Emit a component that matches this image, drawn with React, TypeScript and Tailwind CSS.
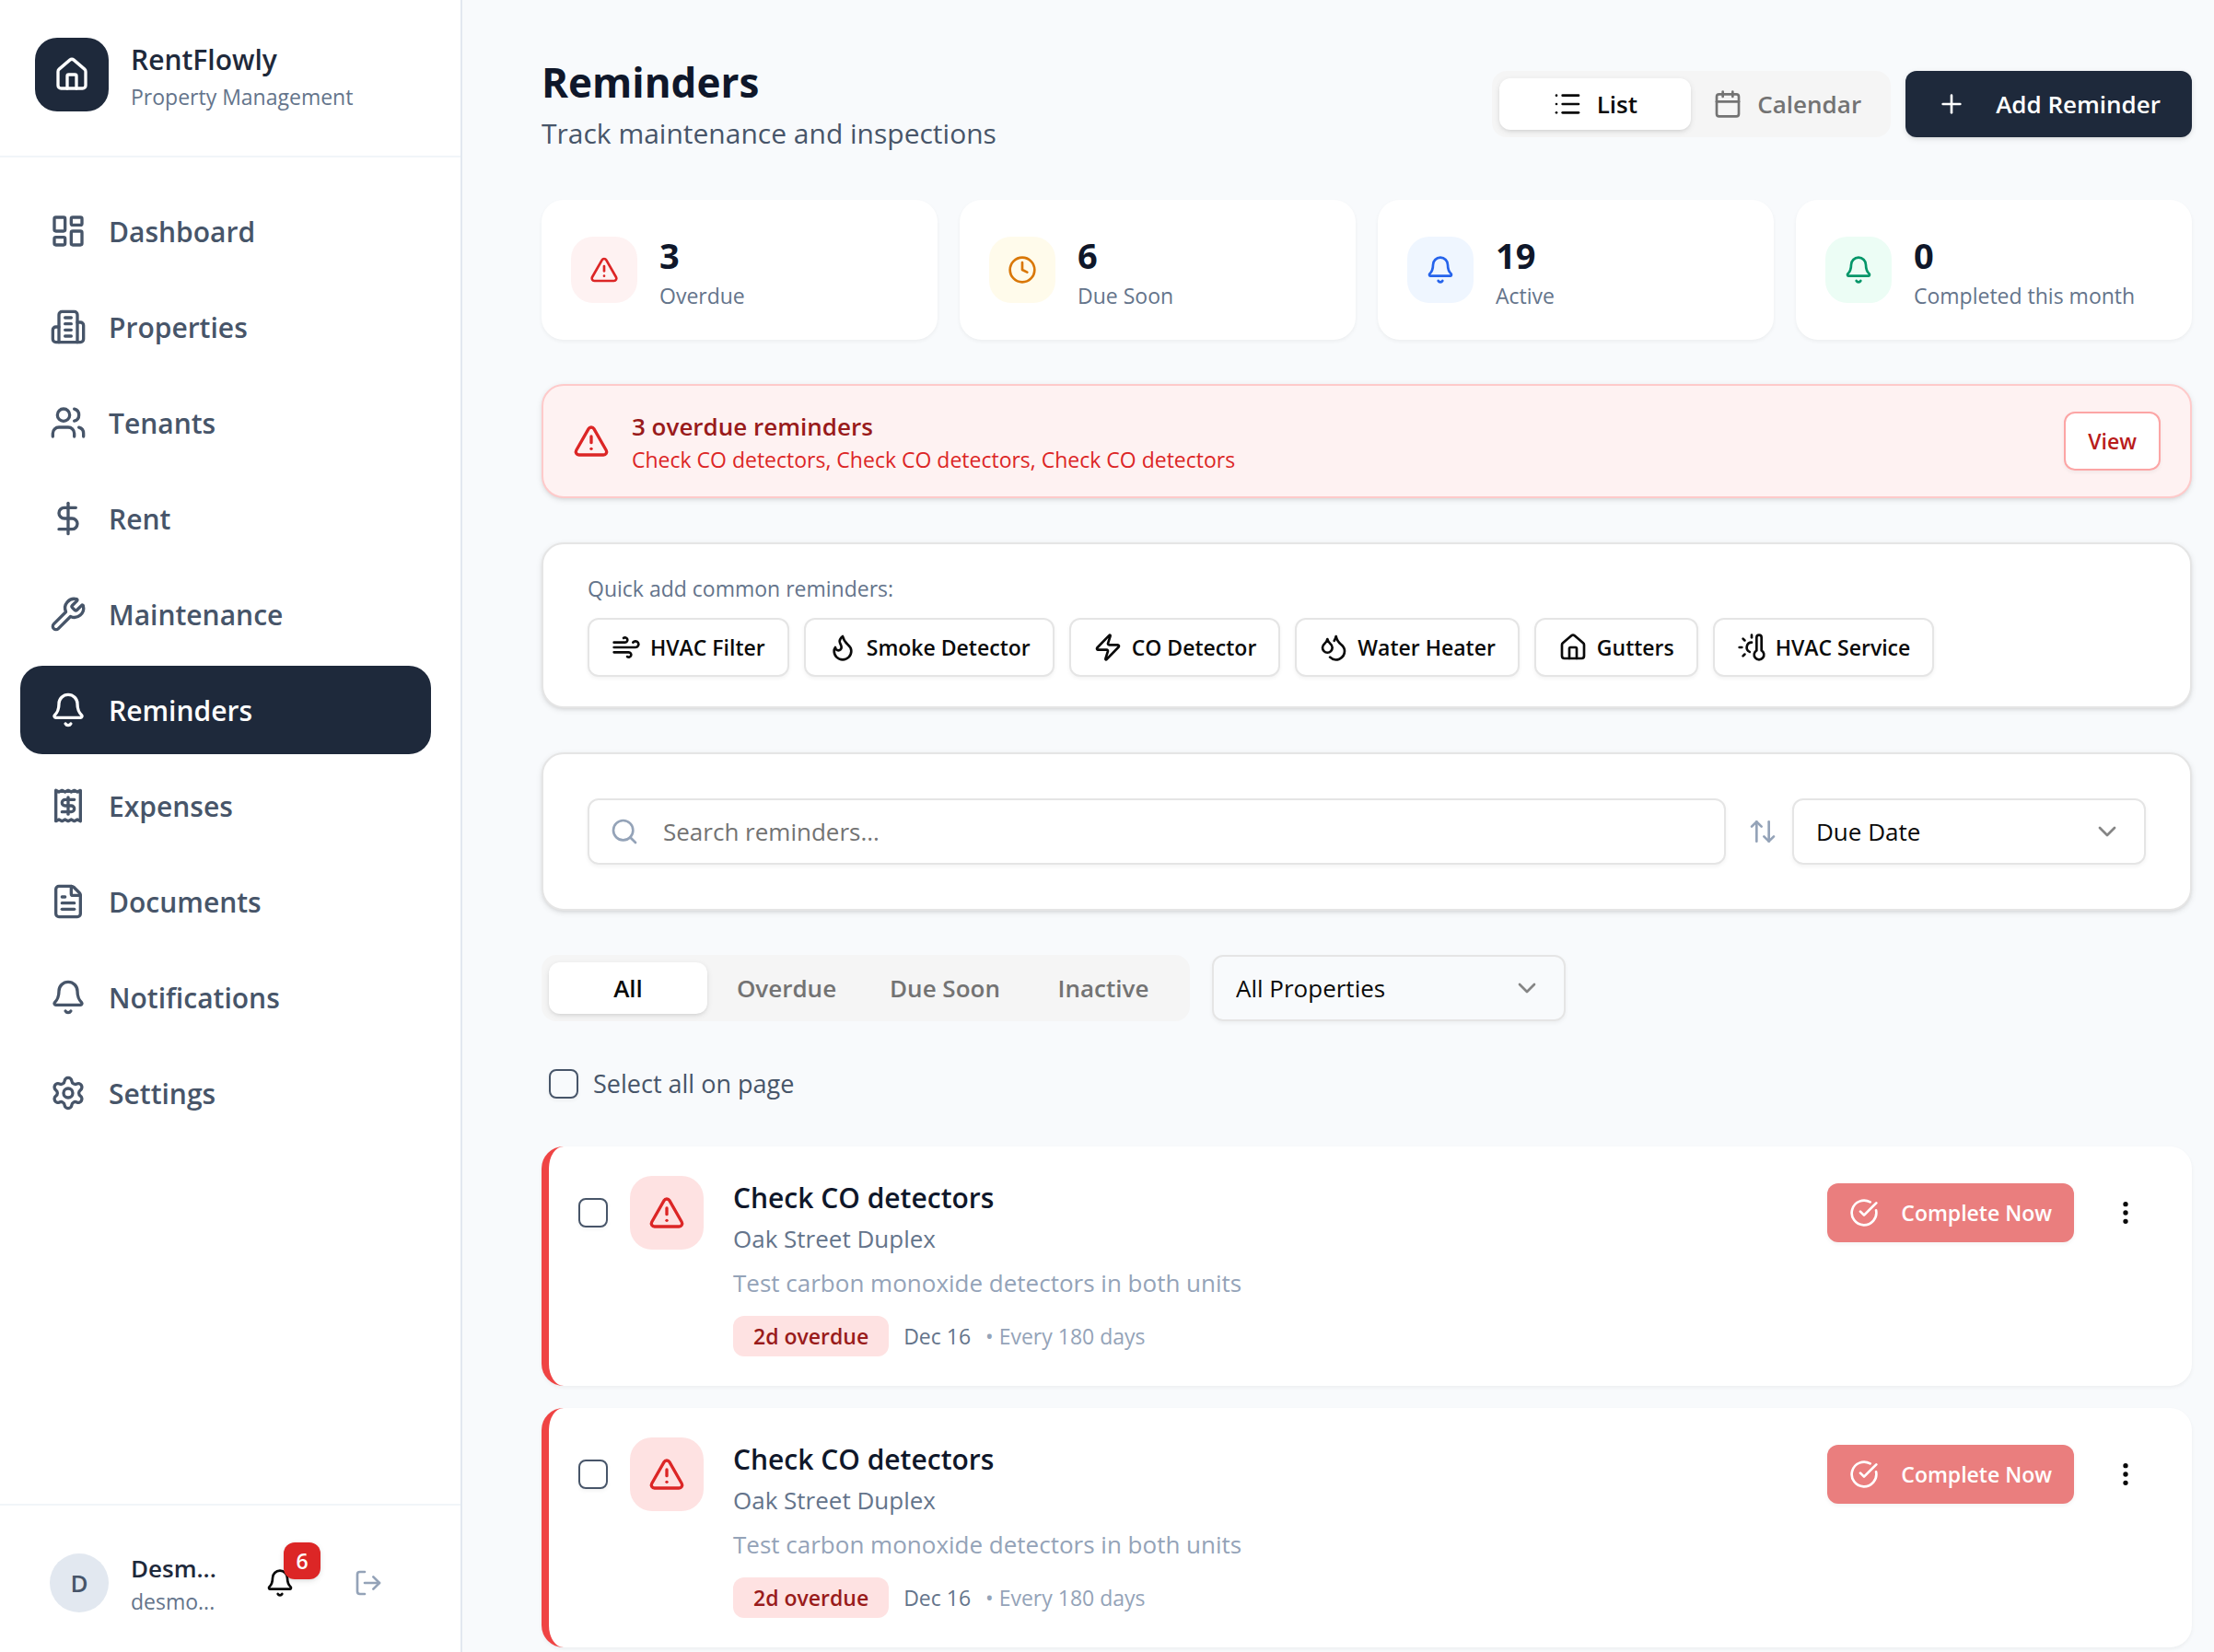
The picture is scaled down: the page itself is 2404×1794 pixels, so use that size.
import React from 'react';
import {
    ArrowUpDown,
    Bell,
    Calendar,
    ChevronDown,
    CircleCheckBig,
    Clock,
    DollarSign,
    Droplets,
    EllipsisVertical,
    FileText,
    Flame,
    House,
    LayoutDashboard,
    List,
    LogOut,
    Plus,
    Receipt,
    Search,
    Settings,
    ThermometerSun,
    TriangleAlert,
    Users,
    Wind,
    Wrench,
    Zap,
} from 'lucide-react';

const BuildingIcon = ({ className }: { className?: string }) => (
    <svg viewBox="0 0 24 24" fill="none" stroke="currentColor" strokeWidth="2" strokeLinecap="round" strokeLinejoin="round" className={className}>
        <path d="M6 22V4a2 2 0 0 1 2-2h8a2 2 0 0 1 2 2v18Z" />
        <path d="M6 12H4a2 2 0 0 0-2 2v6a2 2 0 0 0 2 2h2" />
        <path d="M18 9h2a2 2 0 0 1 2 2v9a2 2 0 0 1-2 2h-2" />
        <path d="M10 6h4M10 10h4M10 14h4M10 18h4" />
    </svg>
);

const navItems = [
    { label: 'Dashboard', icon: LayoutDashboard },
    { label: 'Properties', icon: BuildingIcon },
    { label: 'Tenants', icon: Users },
    { label: 'Rent', icon: DollarSign },
    { label: 'Maintenance', icon: Wrench },
    { label: 'Reminders', icon: Bell, active: true },
    { label: 'Expenses', icon: Receipt },
    { label: 'Documents', icon: FileText },
    { label: 'Notifications', icon: Bell },
    { label: 'Settings', icon: Settings },
];

const stats = [
    { value: 3, label: 'Overdue', icon: TriangleAlert, tone: 'bg-[#fef2f2] text-[#dc2626]' },
    { value: 6, label: 'Due Soon', icon: Clock, tone: 'bg-[#fffbeb] text-[#d97706]' },
    { value: 19, label: 'Active', icon: Bell, tone: 'bg-[#eff6ff] text-[#2563eb]' },
    { value: 0, label: 'Completed this month', icon: Bell, tone: 'bg-[#ecfdf5] text-[#059669]' },
];

const quickAdds = [
    { label: 'HVAC Filter', icon: Wind },
    { label: 'Smoke Detector', icon: Flame },
    { label: 'CO Detector', icon: Zap },
    { label: 'Water Heater', icon: Droplets },
    { label: 'Gutters', icon: House },
    { label: 'HVAC Service', icon: ThermometerSun },
];

const reminders = [
    { id: 1, title: 'Check CO detectors', property: 'Oak Street Duplex', notes: 'Test carbon monoxide detectors in both units', badge: '2d overdue', date: 'Dec 16', repeat: 'Every 180 days' },
    { id: 2, title: 'Check CO detectors', property: 'Oak Street Duplex', notes: 'Test carbon monoxide detectors in both units', badge: '2d overdue', date: 'Dec 16', repeat: 'Every 180 days' },
];

// Shared elevations: soft for controls and cards, raised for panels and tabs
const soft = 'shadow-[0_2px_4px_rgba(0,0,0,0.05)]';
const raised = 'shadow-[0_2px_6px_rgba(0,0,0,0.1),0_2px_4px_-2px_rgba(0,0,0,0.1)]';

const checkboxClass = `size-8 shrink-0 appearance-none rounded-lg border-2 border-[#475569] bg-transparent checked:bg-[#1e293b] ${soft}`;

const Sidebar = () => (
    <aside className="flex w-[502px] shrink-0 flex-col border-r-2 border-[#e2e8f0] bg-white">
        <div className="flex items-center gap-6 border-b-2 border-[#f1f5f9] px-[38px] pt-[41px] pb-12">
            <div className="flex size-20 shrink-0 items-center justify-center rounded-3xl bg-[#1e293b] text-white">
                <House className="size-10" />
            </div>
            <div>
                <p className="text-[30px] leading-12 font-semibold text-[#1e293b]">RentFlowly</p>
                <p className="text-[23px] leading-8 text-[#64748b]">Property Management</p>
            </div>
        </div>

        <nav className="flex-1 py-8 pr-8 pl-[22px]">
            <ul className="flex flex-col gap-2">
                {navItems.map(({ label, icon: Icon, active }) => (
                    <li key={label}>
                        <a
                            href="#"
                            className={`flex h-24 items-center gap-6 rounded-3xl px-8 text-[30px] font-semibold ${active ? 'bg-[#1e293b] text-white' : 'text-[#475569]'}`}
                        >
                            <Icon className="size-10" />
                            {label}
                        </a>
                    </li>
                ))}
            </ul>
        </nav>

        {/* Signed in user */}
        <div className="flex items-center border-t-2 border-[#f1f5f9] pt-12 pr-8 pb-[39px] pl-[54px]">
            <div className="flex size-16 shrink-0 items-center justify-center rounded-full bg-[#e2e8f0] text-[26px] font-semibold text-[#475569]">
                D
            </div>
            <div className="ml-6 w-24">
                <p className="text-[26px] leading-10 font-semibold text-[#1e293b]">Desm...</p>
                <p className="text-[23px] leading-8 text-[#64748b]">desmo...</p>
            </div>
            <button type="button" aria-label="Open alerts" className="relative ml-[34px] flex size-16 items-center justify-center text-[#0a0a0a]">
                <Bell className="size-8" />
                <span className={`absolute -top-3 -right-3 flex size-10 items-center justify-center rounded-xl bg-[#dc2626] text-[23px] font-semibold text-white ${raised}`}>
                    6
                </span>
            </button>
            <button type="button" aria-label="Log out" className="ml-12 flex h-16 items-center text-[#94a3b8]">
                <LogOut className="size-8" />
            </button>
        </div>
    </aside>
);

const PageHeader = () => (
    <div className="flex items-center justify-between">
        <div>
            <h1 className="text-[44px] leading-16 font-bold text-[#0f172a]">Reminders</h1>
            <p className="text-[30px] leading-12 text-[#475569]">Track maintenance and inspections</p>
        </div>
        <div className="flex items-center gap-4">
            <div role="tablist" className="grid h-18 grid-cols-2 rounded-2xl bg-[#f5f5f5] p-2 text-[26px] font-semibold">
                <button type="button" role="tab" aria-selected="true" className={`flex items-center justify-center gap-4 rounded-xl bg-white px-6 text-[#0a0a0a] ${raised}`}>
                    <List className="size-8" />
                    List
                </button>
                <button type="button" role="tab" aria-selected="false" className="flex items-center justify-center gap-4 rounded-xl px-6 text-[#737373]">
                    <Calendar className="size-8" />
                    Calendar
                </button>
            </div>
            <button type="button" className={`flex h-18 items-center gap-8 rounded-xl bg-[#1e293b] px-[34px] text-[26px] font-semibold text-white ${raised}`}>
                <Plus className="size-8" />
                Add Reminder
            </button>
        </div>
    </div>
);

const StatCards = () => (
    <div className="grid grid-cols-4 gap-6">
        {stats.map(({ value, label, icon: Icon, tone }) => (
            <div key={label} className={`flex h-38 items-center gap-6 rounded-3xl bg-white px-8 ${soft}`}>
                <div className={`flex size-18 items-center justify-center rounded-3xl ${tone}`}>
                    <Icon className="size-8" />
                </div>
                <div>
                    <p className="text-[38px] leading-14 font-bold text-[#0f172a]">{value}</p>
                    <p className="text-[23px] leading-8 text-[#64748b]">{label}</p>
                </div>
            </div>
        ))}
    </div>
);

const OverdueAlert = () => (
    <div className={`flex h-31 items-center gap-6 rounded-3xl border-2 border-[#fecaca] bg-[#fef2f2] px-8 ${raised}`}>
        <TriangleAlert className="size-10 text-[#dc2626]" />
        <div className="flex-1">
            <p className="text-[26px] leading-10 font-semibold text-[#991b1b]">3 overdue reminders</p>
            <p className="text-[23px] leading-8 text-[#dc2626]">Check CO detectors, Check CO detectors, Check CO detectors</p>
        </div>
        <button type="button" className={`h-16 rounded-xl border-2 border-[#fca5a5] bg-white px-6 text-[23px] font-semibold text-[#b91c1c] ${soft}`}>
            View
        </button>
    </div>
);

const QuickAdd = () => (
    <div className={`rounded-3xl border-2 border-[#e5e5e5] bg-white px-12 py-8 ${raised}`}>
        <p className="text-[23px] leading-8 text-[#64748b]">Quick add common reminders:</p>
        <div className="mt-4 flex flex-wrap gap-4">
            {quickAdds.map(({ label, icon: Icon }) => (
                <button
                    key={label}
                    type="button"
                    className={`flex h-16 items-center gap-[10px] rounded-xl border-2 border-[#e5e5e5] bg-white px-6 text-[23px] font-semibold text-[#0a0a0a] ${soft}`}
                >
                    <Icon className="size-8" />
                    {label}
                </button>
            ))}
        </div>
    </div>
);

const SelectBox = ({ label, options }: { label: string; options: string[] }) => (
    <div className="relative w-96">
        <select
            aria-label={label}
            className={`h-18 w-full appearance-none rounded-xl border-2 border-[#e5e5e5] bg-transparent px-6 text-[26px] text-[#0a0a0a] ${soft}`}
        >
            {options.map((option) => (
                <option key={option}>{option}</option>
            ))}
        </select>
        <ChevronDown className="pointer-events-none absolute top-5 right-[26px] size-8 text-[#858585]" />
    </div>
);

const SearchBar = () => (
    <div className={`flex items-center rounded-3xl border-2 border-[#e5e5e5] bg-white p-12 ${raised}`}>
        <div className="relative flex-1">
            <Search className="absolute top-5 left-6 size-8 text-[#94a3b8]" />
            <input
                type="text"
                aria-label="Search reminders"
                placeholder="Search reminders..."
                className={`h-18 w-full rounded-xl border-2 border-[#e5e5e5] bg-transparent pr-6 pl-20 text-[26px] placeholder:text-[#737373] ${soft}`}
            />
        </div>
        <ArrowUpDown className="mr-4 ml-6 size-8 text-[#94a3b8]" />
        <SelectBox label="Sort by" options={['Due Date', 'Title', 'Property']} />
    </div>
);

const Filters = () => (
    <div className="flex items-center gap-6">
        <div role="tablist" className="grid h-18 w-[704px] grid-cols-4 rounded-2xl bg-[#f5f5f5] p-2 text-[26px] font-semibold text-[#737373]">
            <button type="button" role="tab" aria-selected="true" className={`rounded-xl bg-white text-[#0a0a0a] ${raised}`}>All</button>
            <button type="button" role="tab" aria-selected="false">Overdue</button>
            <button type="button" role="tab" aria-selected="false">Due Soon</button>
            <button type="button" role="tab" aria-selected="false">Inactive</button>
        </div>
        <SelectBox label="Property" options={['All Properties', 'Oak Street Duplex']} />
    </div>
);

const ReminderCard = ({ reminder }: { reminder: (typeof reminders)[number] }) => (
    <li className={`flex items-start rounded-3xl border-l-8 border-[#ef4444] bg-white p-8 ${soft}`}>
        <input type="checkbox" aria-label={`Select ${reminder.title}`} className={`mt-6 ${checkboxClass}`} />
        <div className="ml-6 flex size-20 shrink-0 items-center justify-center rounded-3xl bg-[#fee2e2] text-[#dc2626]">
            <TriangleAlert className="size-10" />
        </div>
        <div className="ml-8 flex-1">
            <h2 className="text-[30px] leading-12 font-semibold text-[#0f172a]">{reminder.title}</h2>
            <p className="text-[26px] leading-10 text-[#64748b]">{reminder.property}</p>
            <p className="mt-2 text-[26px] leading-10 text-[#94a3b8]">{reminder.notes}</p>
            <div className="mt-4 flex items-center gap-4 text-[23px] leading-8">
                <span className="flex h-11 items-center rounded-xl bg-[#fee2e2] px-[22px] font-semibold text-[#991b1b]">{reminder.badge}</span>
                <span className="text-[#64748b]">{reminder.date}</span>
                <span className="text-[#94a3b8]">• {reminder.repeat}</span>
            </div>
        </div>
        <div className="flex items-center gap-4">
            <button type="button" className={`flex h-16 items-center gap-6 rounded-xl bg-[#ea7e7e] px-6 text-[23px] font-semibold text-white ${soft}`}>
                <CircleCheckBig className="size-8" />
                Complete Now
            </button>
            <button type="button" aria-label="More actions" className="flex size-20 items-center justify-center text-[#0a0a0a]">
                <EllipsisVertical className="size-8" />
            </button>
        </div>
    </li>
);

const App = () => {
    return (
        <div className="flex min-h-screen bg-[#f8fafc] font-['Open_Sans','Noto_Sans',sans-serif]">
            <Sidebar />
            <main className="flex min-w-0 flex-1 flex-col gap-12 pt-[57px] pr-6 pl-[86px]">
                <PageHeader />
                <StatCards />
                <OverdueAlert />
                <QuickAdd />
                <SearchBar />
                <Filters />
                <label className="flex items-center gap-4 px-2 text-[27px] leading-10 text-[#475569]">
                    <input type="checkbox" className={checkboxClass} />
                    Select all on page
                </label>
                <ul className="flex flex-col gap-6">
                    {reminders.map((reminder) => (
                        <ReminderCard key={reminder.id} reminder={reminder} />
                    ))}
                </ul>
            </main>
        </div>
    );
};

export default App;
